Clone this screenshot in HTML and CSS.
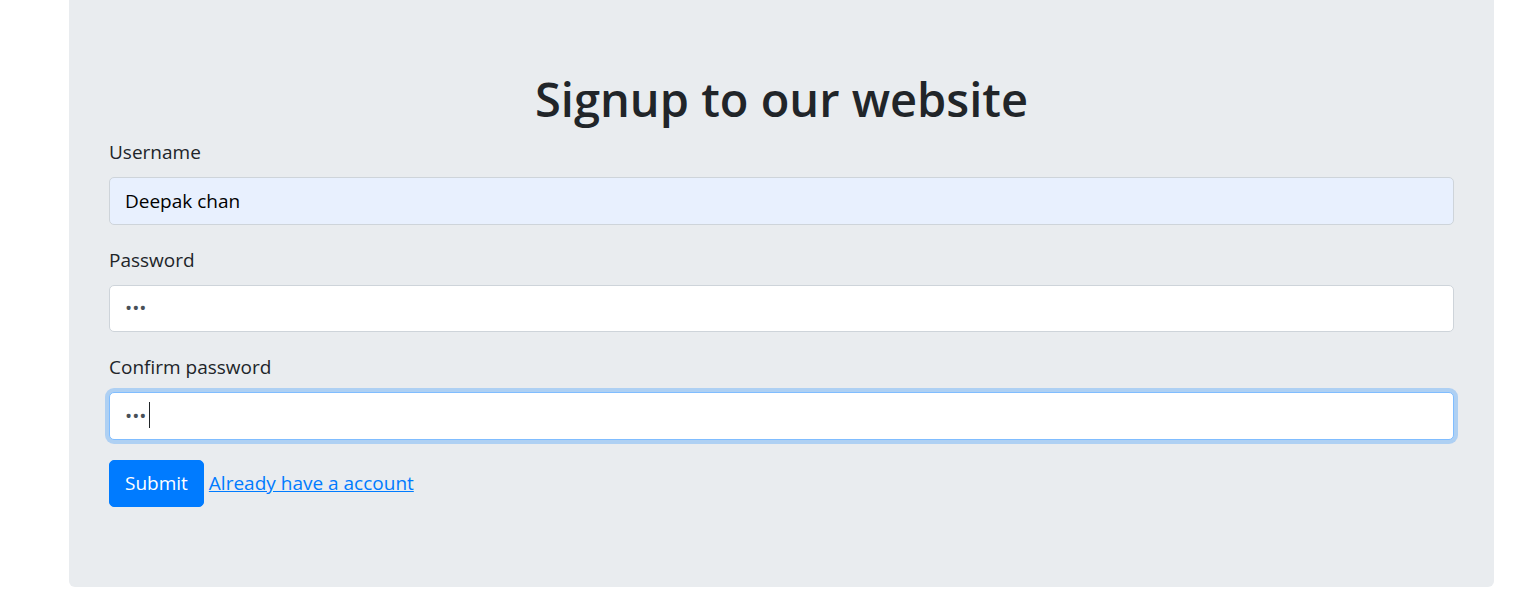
FILE: index.html
```html
<!DOCTYPE html>
<html lang="en">
<head>
<meta charset="utf-8">
<title>Signup</title>
<link rel="stylesheet" href="styles.css">
</head>
<body>
<div class="container">
  <div class="jumbotron">
    <h1 class="title">Signup to our website</h1>
    <form class="form">
      <div class="form-group">
        <label class="label" for="username">Username</label>
        <input class="form-control autofill" id="username" type="text" value="Deepak chan">
      </div>
      <div class="form-group">
        <label class="label" for="password">Password</label>
        <input class="form-control" id="password" type="password" value="abc">
      </div>
      <div class="form-group">
        <label class="label" for="cpassword">Confirm password</label>
        <div class="field-wrap">
          <input class="form-control focused" id="cpassword" type="password" value="abc">
          <span class="caret"></span>
        </div>
      </div>
      <div class="actions">
        <button type="button" class="btn">Submit</button>
        <a class="link" href="#">Already have a account</a>
      </div>
    </form>
  </div>
</div>
</body>
</html>
```
FILE: styles.css
```css
* { box-sizing: border-box; }
html, body {
  margin: 0;
  padding: 0;
  background: #fff;
}
body {
  font-family: "Open Sans", "Noto Sans", sans-serif;
  font-size: 19px;
  line-height: 1.5;
  color: #212529;
}
.container {
  width: 1425px;
  margin-left: 69px;
}
.jumbotron {
  background: #e9ecef;
  padding: 67px 40px 80px;
  border-radius: 0 0 6px 6px;
}
.title {
  margin: 0 0 8px;
  padding-top: 2px;
  font-size: 47px;
  font-weight: 600;
  line-height: 60px;
  text-align: center;
  color: #212529;
}
.form { margin: 0; }
.form-group {
  margin-bottom: 20px;
}
.label {
  display: inline-block;
  margin-bottom: 10px;
  font-size: 19px;
  line-height: 30px;
  height: 30px;
}
.form-control {
  display: block;
  width: 100%;
  height: 47.5px;
  padding: 7.5px 15px;
  font-family: inherit;
  font-size: 19px;
  line-height: 30px;
  color: #495057;
  background: #fff;
  border: 1px solid #ced4da;
  border-radius: 5px;
  outline: none;
}
.autofill {
  background: #e8f0fe;
  color: #000;
}
.focused {
  border-color: #80bdff;
  box-shadow: 0 0 0 4px rgba(0, 123, 255, 0.25);
}
.field-wrap { position: relative; }
.caret {
  position: absolute;
  left: 40px;
  top: 10px;
  width: 1px;
  height: 26px;
  background: #212529;
}
.actions {
  display: flex;
  align-items: center;
  gap: 5px;
}
.btn {
  font-family: inherit;
  font-size: 19px;
  line-height: 30px;
  height: 47.5px;
  padding: 7.5px 15px;
  color: #fff;
  background: #007bff;
  border: 1px solid #007bff;
  border-radius: 5px;
}
.link {
  color: #007bff;
  text-decoration: underline;
  font-size: 19px;
}
```
